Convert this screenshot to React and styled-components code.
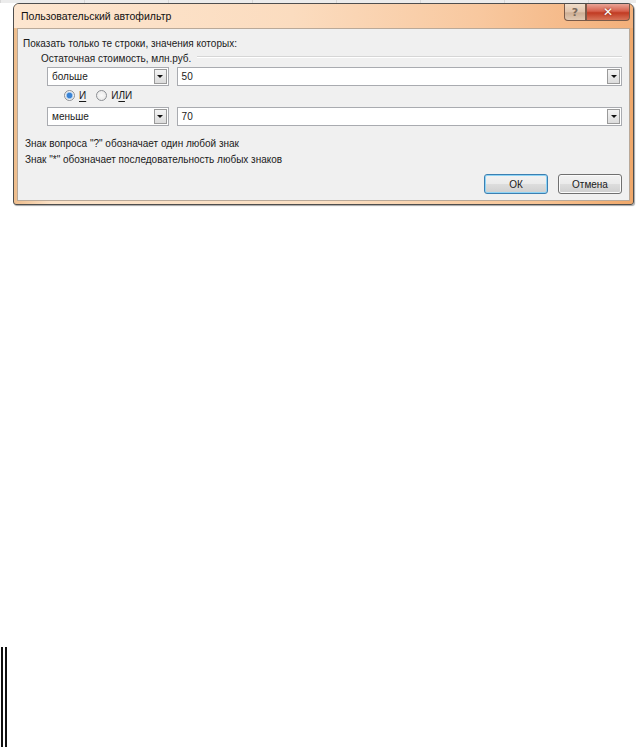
import React from 'react';
import styled, { createGlobalStyle } from 'styled-components';

const GlobalStyle = createGlobalStyle`
  html, body {
    margin: 0;
    padding: 0;
    background: #fff;
  }
  body {
    font-family: "Liberation Sans", "DejaVu Sans", sans-serif;
    font-size: 10px;
    color: #1a1a1a;
  }
`;

const Page = styled.div`
  width: 636px;
  height: 747px;
  overflow: hidden;
  display: flex;
  flex-direction: column;
`;

const SheetStrip = styled.div`
  height: 3px;
  background: repeating-linear-gradient(90deg, #d8d8d8 0 1px, #ececec 1px 84px);
`;

const Dialog = styled.div`
  margin-left: 13px;
  width: 619px;
  height: 200px;
  display: flex;
  flex-direction: column;
  border: 1px solid #4e4e4e;
  border-radius: 6px 6px 3px 3px;
  background: linear-gradient(90deg, #eebd8c 0%, #fbe2c8 6%, #fbe0c4 50%, #f7c495 85%, #f0a86a 100%);
  box-shadow: 1px 1px 1px rgba(0, 0, 0, 0.35);
`;

const TitleBar = styled.div`
  height: 24px;
  display: flex;
  align-items: flex-start;
  padding-left: 7px;
  background: linear-gradient(90deg, #fde6d0 0%, #fbdcbf 45%, #f8c89f 75%, #f3b07a 100%);
  border-radius: 5px 5px 0 0;
`;

const Title = styled.div`
  margin-top: 6px;
  font-size: 10.5px;
  color: #111;
`;

const Controls = styled.div`
  margin-left: auto;
  margin-right: 3px;
  display: flex;
`;

const CaptionButton = styled.div`
  width: ${p => p.$wide ? 44 : 22}px;
  height: 17px;
  display: flex;
  align-items: center;
  justify-content: center;
  border: 1px solid #7a5a48;
  border-top: none;
  box-sizing: border-box;
  font-family: "DejaVu Sans", sans-serif;
  font-weight: bold;
  color: ${p => p.$wide ? '#fff' : '#7a6a5c'};
  font-size: ${p => p.$wide ? 12 : 11}px;
  background: ${p => p.$wide
    ? 'linear-gradient(180deg, #e9a497 0%, #d6604c 45%, #c13b23 55%, #d77458 100%)'
    : 'linear-gradient(180deg, #f1ddc9 0%, #dfc4ad 50%, #cdae94 55%, #e1cab4 100%)'};
  border-radius: ${p => p.$wide ? '0 0 4px 0' : '0 0 0 4px'};
  text-shadow: ${p => p.$wide ? '0 0 2px #7a1d0d' : 'none'};
`;

const Panel = styled.div`
  flex: 1;
  margin: 0 3px 3px 3px;
  background: #f0f0f0;
  border: 1px solid #b9a999;
  padding: 8px 7px 0 5px;
  display: flex;
  flex-direction: column;
`;

const Line = styled.div`
  height: 14px;
  line-height: 14px;
  white-space: nowrap;
`;

const GroupLabel = styled.div`
  display: flex;
  align-items: center;
  gap: 6px;
  height: 14px;
  padding-left: 18px;
  &::after {
    content: '';
    flex: 1;
    height: 1px;
    margin-top: -3px;
    background: #d6d6d6;
    border-bottom: 1px solid #fff;
  }
`;

const CondRow = styled.div`
  display: flex;
  gap: 8px;
  padding-left: 24px;
  margin-top: ${p => p.$top}px;
`;

const Combo = styled.div`
  width: ${p => p.$w}px;
  height: 19px;
  box-sizing: border-box;
  border: 1px solid #a9abb0;
  background: #fff;
  display: flex;
  align-items: center;
  padding: 1px 1px 1px 4px;
`;

const ComboText = styled.span`
  flex: 1;
  font-size: 10px;
`;

const DropButton = styled.div`
  width: 13px;
  height: 15px;
  box-sizing: border-box;
  border: 1px solid #9a9a9a;
  background: linear-gradient(180deg, #f4f4f4 0%, #dcdcdc 100%);
  display: flex;
  align-items: center;
  justify-content: center;
  &::after {
    content: '';
    border-left: 3px solid transparent;
    border-right: 3px solid transparent;
    border-top: 3px solid #111;
  }
`;

const RadioRow = styled.div`
  display: flex;
  align-items: center;
  gap: 4px;
  padding-left: 41px;
  height: 18px;
`;

const Radio = styled.span`
  width: 11px;
  height: 11px;
  box-sizing: border-box;
  border-radius: 50%;
  border: 1px solid #8c8f94;
  background: radial-gradient(circle, ${p => p.$on ? '#3a83d4 0 2.5px, #9cc5ef 3px, #f2f2f2 4px' : '#fafafa 0, #e4e4e4 100%'});
`;

const RadioLabel = styled.span`
  margin-right: 6px;
`;

const Key = styled.u`
  text-decoration-thickness: 1px;
  text-underline-offset: 2px;
`;

const Hints = styled.div`
  margin-top: 11px;
  display: flex;
  flex-direction: column;
  gap: 2px;
  padding-left: 2px;
`;

const Footer = styled.div`
  display: flex;
  justify-content: flex-end;
  gap: 10px;
  margin-top: 7px;
`;

const Button = styled.div`
  width: 64px;
  height: 20px;
  box-sizing: border-box;
  border-radius: 3px;
  border: 1px solid ${p => p.$default ? '#3c7fb1' : '#707070'};
  box-shadow: ${p => p.$default ? 'inset 0 0 0 1px #8ed4f6' : 'inset 0 0 0 1px #fbfbfb'};
  background: linear-gradient(180deg, #f2f2f2 0%, #ebebeb 48%, #dddddd 52%, #cfcfcf 100%);
  display: flex;
  align-items: center;
  justify-content: center;
  font-size: 10px;
`;

const Marker = styled.div`
  margin-top: 442px;
  margin-left: 1px;
  width: 2px;
  height: 100px;
  border-left: 2px solid #111;
  border-right: 2px solid #111;
`;

export default function App() {
  return (
    <Page>
      <GlobalStyle />
      <SheetStrip />
      <Dialog>
        <TitleBar>
          <Title>Пользовательский автофильтр</Title>
          <Controls>
            <CaptionButton>?</CaptionButton>
            <CaptionButton $wide>✕</CaptionButton>
          </Controls>
        </TitleBar>
        <Panel>
          <Line>Показать только те строки, значения которых:</Line>
          <GroupLabel>Остаточная стоимость, млн.руб.</GroupLabel>
          <CondRow $top={2}>
            <Combo $w={122}>
              <ComboText>больше</ComboText>
              <DropButton />
            </Combo>
            <Combo $w={447}>
              <ComboText>50</ComboText>
              <DropButton />
            </Combo>
          </CondRow>
          <RadioRow>
            <Radio $on />
            <RadioLabel><Key>И</Key></RadioLabel>
            <Radio />
            <RadioLabel>И<Key>Л</Key>И</RadioLabel>
          </RadioRow>
          <CondRow $top={3}>
            <Combo $w={122}>
              <ComboText>меньше</ComboText>
              <DropButton />
            </Combo>
            <Combo $w={447}>
              <ComboText>70</ComboText>
              <DropButton />
            </Combo>
          </CondRow>
          <Hints>
            <Line>Знак вопроса "?" обозначает один любой знак</Line>
            <Line>Знак "*" обозначает последовательность любых знаков</Line>
          </Hints>
          <Footer>
            <Button $default>ОК</Button>
            <Button>Отмена</Button>
          </Footer>
        </Panel>
      </Dialog>
      <Marker />
    </Page>
  );
}
